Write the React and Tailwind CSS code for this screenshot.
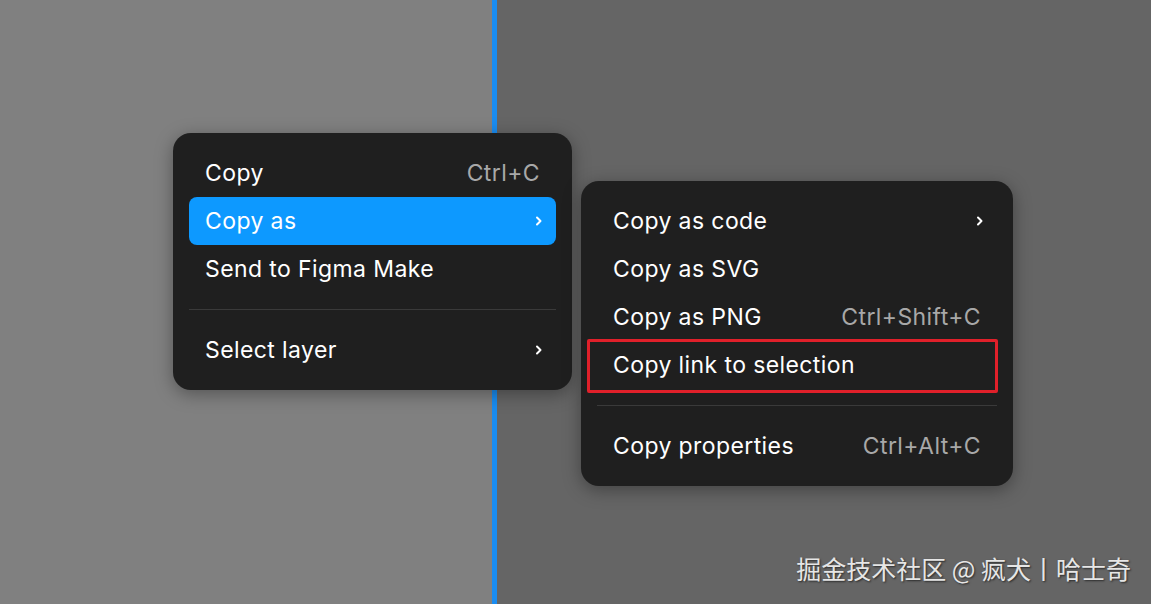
const font = { fontFamily: 'Inter, "Noto Sans", sans-serif' };

const Chevron = () => (
    <svg width="8" height="12" viewBox="0 0 8 12" className="mr-[-3px]">
        <path d="M2 2.5 L5.5 6 L2 9.5" fill="none" stroke="white" strokeWidth="2" strokeLinecap="round" strokeLinejoin="round" />
    </svg>
);

const Item = ({ label, shortcut, sub, active }) => (
    <div
        className={`h-12 flex items-center justify-between px-4 rounded-lg text-[23px] tracking-[0.4px] leading-none text-white ${
            active ? 'bg-[#0d99ff]' : ''
        }`}
    >
        <span>{label}</span>
        {shortcut && <span className="text-[#a8a8a8]">{shortcut}</span>}
        {sub && <Chevron />}
    </div>
);

const Divider = () => <div className="my-4 h-px bg-[#3a3a3a]" />;

export default function App() {
    return (
        <div className="relative w-[1151px] h-[604px] overflow-hidden flex" style={font}>
            {/* canvas background */}
            <div className="w-[492px] bg-[#808080]" />
            <div className="w-[5px] bg-[#1a8cf0]" />
            <div className="flex-1 bg-[#656565]" />

            {/* main context menu */}
            <div className="absolute left-[173px] top-[133px] w-[399px] p-4 bg-[#1f1f1f] rounded-[18px] shadow-[0_4px_18px_rgba(0,0,0,0.35)]">
                <Item label="Copy" shortcut="Ctrl+C" />
                <Item label="Copy as" sub active />
                <Item label="Send to Figma Make" />
                <Divider />
                <Item label="Select layer" sub />
            </div>

            {/* submenu */}
            <div className="absolute left-[581px] top-[181px] w-[432px] p-4 bg-[#1f1f1f] rounded-[18px] shadow-[0_4px_18px_rgba(0,0,0,0.35)]">
                <Item label="Copy as code" sub />
                <Item label="Copy as SVG" />
                <Item label="Copy as PNG" shortcut="Ctrl+Shift+C" />
                <div className="relative">
                    <Item label="Copy link to selection" />
                    <div className="absolute left-[-10px] right-[-1px] top-[-2px] bottom-[-4px] border-[3px] border-[#e0202a] rounded-[2px]" />
                </div>
                <Divider />
                <Item label="Copy properties" shortcut="Ctrl+Alt+C" />
            </div>

            {/* watermark */}
            <div
                className="absolute right-[20px] bottom-[17px] text-[25px] text-[#e6e6e6] [text-shadow:1px_1px_2px_rgba(0,0,0,0.6)]"
                style={{ fontFamily: '"Noto Sans CJK SC", "Noto Sans", sans-serif' }}
            >
                掘金技术社区 @ 疯犬丨哈士奇
            </div>
        </div>
    );
}
